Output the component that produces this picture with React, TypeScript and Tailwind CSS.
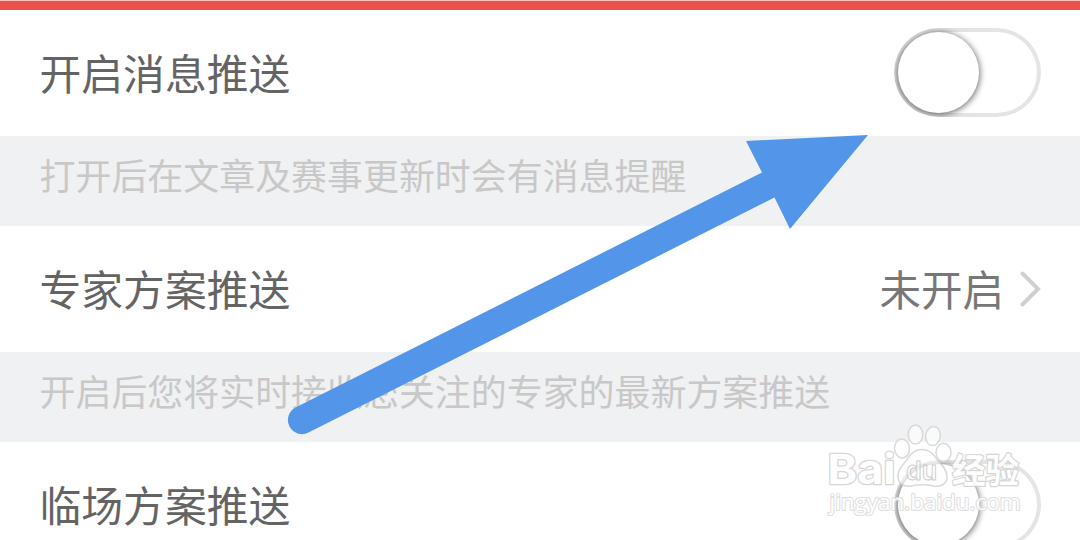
import { clsx } from 'clsx';
import { useState } from 'react';

interface SwitchProps {
    label: string;
}

function Switch({ label }: SwitchProps) {
    const [on, setOn] = useState(false);

    // The border is an inset shadow so that the knob's shadow falls over it
    return (
        <button
            type="button"
            role="switch"
            aria-checked={on}
            aria-label={label}
            onClick={() => setOn(!on)}
            className={clsx(
                'flex h-[89px] w-[147px] shrink-0 items-center overflow-hidden rounded-full px-1 shadow-[inset_0_0_0_4px_#e4e4e4]',
                on ? 'justify-end bg-[#e9524d]' : 'justify-start bg-white'
            )}
        >
            <span className="size-[81px] rounded-full bg-white shadow-[0_1px_6px_1px_rgba(0,0,0,0.55)]" />
        </button>
    );
}

interface RowProps {
    title: string;
    children: React.ReactNode;
}

function Row({ title, children }: RowProps) {
    return (
        <div className="flex h-[126px] shrink-0 items-center justify-between bg-white pr-[39px] pb-0.5 pl-[39.5px]">
            <span className="text-[41.8px] leading-[60px] text-[#646464]">{title}</span>
            {children}
        </div>
    );
}

function Hint({ text }: { text: string }) {
    return (
        <p className="h-[90px] shrink-0 bg-[#f0f1f3] pt-3 pl-[39.5px] text-[35.95px] leading-[52px] text-[#c8c8c8]">
            {text}
        </p>
    );
}

function Arrow() {
    return (
        <svg className="pointer-events-none absolute top-0 left-0" width="1080" height="540" viewBox="0 0 1080 540">
            <path
                d="M762 172.5 L295.5 407.5 A14 14 0 0 0 308.5 432.5 L774.5 197.5 L790 229 L868 135 L746 141 Z"
                fill="#5295e9"
            />
        </svg>
    );
}

function Watermark() {
    return (
        <svg
            className="pointer-events-none absolute top-[420px] left-[820px] opacity-85"
            width="210"
            height="104"
            viewBox="820 420 210 104"
            fill="#ffffff"
        >
            <g stroke="#d4d4d4" strokeWidth="1.5" fillOpacity="0.75">
                <ellipse cx="915.5" cy="434.5" rx="7.2" ry="9.6" />
                <ellipse cx="933" cy="436" rx="7.3" ry="9.6" transform="rotate(8 933 436)" />
                <ellipse cx="902" cy="448.5" rx="7.5" ry="9.5" transform="rotate(-5 902 448.5)" />
                <ellipse cx="943.5" cy="452.5" rx="7.5" ry="9.2" />
                <path d="M922 449.5 C928 449.5 932 452 936 458 C939 464 947 467 947 477 C947 484 941 487 934 486 C927 484.5 918 484.5 911 486 C904 487 898 484 898 476 C898 467 905 464 908 458 C912 452 916 449.5 922 449.5 Z" />
            </g>
            <g
                className="font-['Inter',sans-serif] font-bold"
                stroke="#d0d0d0"
                strokeWidth="2.4"
                strokeLinejoin="round"
                paintOrder="stroke"
            >
                <text x="827.5" y="484" fontSize="41.5" textLength="68" lengthAdjust="spacingAndGlyphs">
                    Bai
                </text>
                <text
                    x="952"
                    y="482.5"
                    fontSize="34"
                    textLength="67"
                    lengthAdjust="spacingAndGlyphs"
                    className="font-['Noto_Sans_CJK_SC',sans-serif]"
                >
                    经验
                </text>
            </g>
            <text
                x="906"
                y="480"
                fontSize="26"
                textLength="31"
                lengthAdjust="spacingAndGlyphs"
                stroke="#c6c6c6"
                strokeWidth="1"
                className="font-['Inter',sans-serif] font-semibold"
            >
                du
            </text>
            <text
                x="829.5"
                y="510"
                fontSize="22.5"
                textLength="191"
                lengthAdjust="spacingAndGlyphs"
                stroke="#dadada"
                strokeWidth="2.2"
                strokeLinejoin="round"
                paintOrder="stroke"
                className="font-['Open_Sans',sans-serif] font-medium"
            >
                jingyan.baidu.com
            </text>
        </svg>
    );
}

export default function App() {
    return (
        <div className="relative flex h-[540px] w-[1080px] flex-col overflow-hidden bg-white font-['Noto_Sans_CJK_SC',sans-serif]">
            <div className="h-2.5 shrink-0 border-t border-[#f6c3c1] bg-[#e9524d]" />

            <Row title="开启消息推送">
                <Switch label="开启消息推送" />
            </Row>
            <Hint text="打开后在文章及赛事更新时会有消息提醒" />

            <Row title="专家方案推送">
                <div className="flex items-center gap-[15px]">
                    <span className="text-[41.5px] leading-[60px] text-[#777777]">未开启</span>
                    <svg width="22" height="38" viewBox="0 0 22 38" fill="none" stroke="#d0d0d0" strokeWidth="4" strokeLinecap="round">
                        <path d="M3.5 4.5 L19 20 L3.5 35.5" />
                    </svg>
                </div>
            </Row>
            <Hint text="开启后您将实时接收您关注的专家的最新方案推送" />

            <Row title="临场方案推送">
                <Switch label="临场方案推送" />
            </Row>

            <Arrow />
            <Watermark />
        </div>
    );
}
